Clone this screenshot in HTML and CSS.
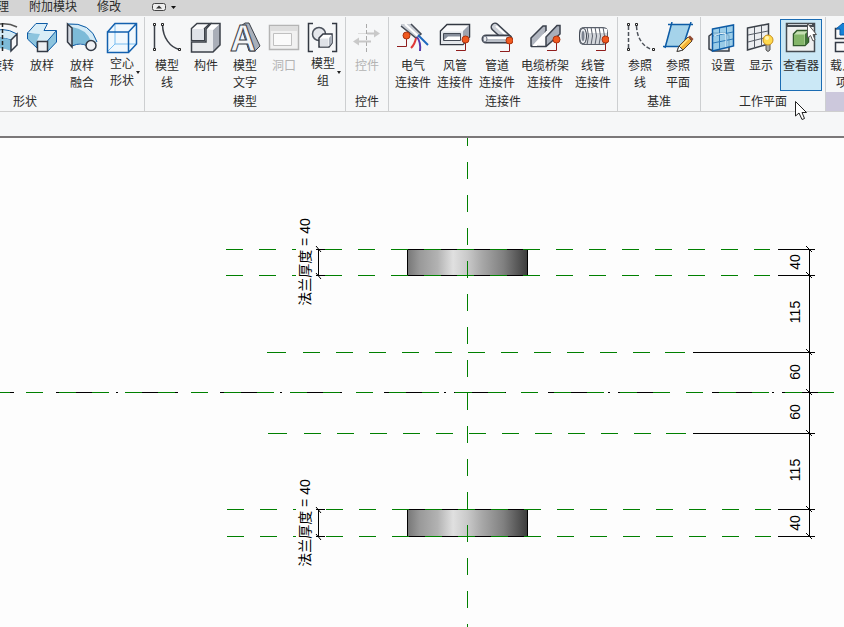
FILE: index.html
```html
<!DOCTYPE html>
<html lang="zh-CN">
<head>
    <meta charset="UTF-8">
    <meta name="viewport" content="width=device-width, initial-scale=1.0">
    <title>族编辑器</title>
    <link rel="stylesheet" href="styles.css">
</head>
<body>

<nav class="tabs">
    <a href="#">管理</a>
    <a href="#">附加模块</a>
    <a href="#">修改</a>
    <button class="tabs-toggle" type="button" aria-label="最小化功能区">
        <svg width="26" height="10" viewBox="0 0 26 10">
            <rect x="1.500" y="1.500" width="13" height="7" rx="2" fill="#eee" stroke="#444"/>
            <path d="M5 6.500L8 3.500L11 6.500z" fill="#333"/>
            <path d="M20 4h5l-2.500 3z" fill="#111"/>
        </svg>
    </button>
</nav>

<header class="ribbon">
    <section class="panel panel-shape">
        <div class="tools">
            <button class="tool" type="button">
                <svg class="icon" viewBox="0 0 32 32">
                    <path d="M2 6Q17-2 31 5" fill="none" stroke="#555" stroke-width="1.500"/>
                    <path d="M2 12Q16 3 31 12L25 18Q14 14 2 18z" fill="#d5ebf6" stroke="#0d5ba5"/>
                    <path d="M2 18Q14 14 25 18V29Q14 24 2 28z" fill="#7dbbd8"/>
                    <path d="M25 18L31 12V23L25 29z" fill="#f5f6f8" stroke="#333a45" stroke-width="1.500"/>
                    <path d="M16.500 1V31" stroke="#222" stroke-width="1.500" stroke-dasharray="4 2"/>
                </svg>
                <span class="label">旋转</span>
            </button>
            <button class="tool" type="button">
                <svg class="icon" viewBox="0 0 32 32">
                    <path d="M1.500 11V17L11 26V20H21V30L30.500 20V9z" fill="#8cc4de" stroke="#0d5ba5"/>
                    <path d="M1.500 11L10 1.500H21.500L18 8.500H30.500L21 19.500H10.500L14 12z" fill="#d9edf7"/>
                    <path d="M1.500 11L10 1.500H21.500L18 8.500H30.500L21 19.500" fill="none" stroke="#0d5ba5"/>
                    <path d="M11.500 19.500H21.500V29.500H11.500z" fill="#eef0f3" stroke="#333a45" stroke-width="1.500"/>
                </svg>
                <span class="label">放样</span>
            </button>
            <button class="tool" type="button">
                <svg class="icon" viewBox="0 0 32 32">
                    <path d="M1 2Q25 0 31 20L21 24Q16 19 6 24V5z" fill="#7dbbd8"/>
                    <path d="M1 2Q25 0 31 20L25 19Q20 7 6 5z" fill="#d3eaf6"/>
                    <path d="M1 2Q25 0 31 20M6 24Q15 20 21 24" fill="none" stroke="#0d5ba5"/>
                    <path d="M1.500 2L6 6V25L1.500 20z" fill="#d5d9e0" stroke="#333a45" stroke-width="1.500"/>
                    <circle cx="25" cy="23.500" r="5" fill="#f0f1f4" stroke="#333a45" stroke-width="1.500"/>
                </svg>
                <span class="label">放样<br>融合</span>
            </button>
            <button class="tool tool-menu" type="button">
                <svg class="icon" viewBox="0 0 32 32">
                    <path d="M1 10L9 1.500H30.500V22L22 30.500H1z" fill="#f1f8fd"/>
                    <path d="M9 2V22H30M9 22L1 30" fill="none" stroke="#79bdf0"/>
                    <path d="M1.500 10H22.500V30.500H1.500zL9 1.500H30.500V22L22.500 30.500M22.500 10L30.500 1.500" fill="none" stroke="#1260ae" stroke-width="1.500"/>
                </svg>
                <span class="label">空心<br>形状</span>
            </button>
        </div>
        <h2 class="panel-title">形状</h2>
    </section>

    <section class="panel panel-model">
        <div class="tools">
            <button class="tool" type="button">
                <svg class="icon" viewBox="0 0 32 32">
                    <path d="M3.500 3V28M11.500 3C12 16 19 25 28 27.500" fill="none" stroke="#3b4048" stroke-width="1.500"/>
                    <path d="M2.500 1.500h2v2h-2zM2.500 26.500h2v2h-2zM10.500 1.500h2v2h-2zM27.500 26.500h2v2h-2z" fill="#fff" stroke="#222"/>
                </svg>
                <span class="label">模型<br>线</span>
            </button>
            <button class="tool" type="button">
                <svg class="icon" viewBox="0 0 32 32">
                    <path d="M1.500 22V30H23L30 23V1.500H21L16 7V19H5z" fill="#e8eaed"/>
                    <path d="M23 8L30 1.500V23L23 30z" fill="#a9aeb8"/>
                    <path d="M16 7L21 1.500H30L23 8z" fill="#fff"/>
                    <path d="M1.500 20V30H23L30 23V1.500H21L16 7V20z" fill="none" stroke="#3b4048" stroke-width="1.500"/>
                    <path d="M1.500 6.500L7 1.500H20L14.500 6.500V18.500H1.500z" fill="#fafafb" stroke="#3b4048" stroke-width="1.500"/>
                    <path d="M2.500 7H14V18H2.500z" fill="#dfe2e8"/>
                </svg>
                <span class="label">构件</span>
            </button>
            <button class="tool" type="button">
                <svg class="icon" viewBox="0 0 32 32">
                    <path d="M12 4L16 1H20L31 24L26 29H20z" fill="#aab0ba" stroke="#3b4048" stroke-linejoin="round"/>
                    <text class="icon-letter" x="1" y="29">A</text>
                </svg>
                <span class="label">模型<br>文字</span>
            </button>
            <button class="tool" type="button" disabled>
                <svg class="icon" viewBox="0 0 32 32">
                    <path d="M1.500 3.500H30.500V27.500H1.500z" fill="#f1f1f1" stroke="#b4b4b4" stroke-width="1.500"/>
                    <path d="M2 4H30V9H2z" fill="#dedede"/>
                    <path d="M5.500 11.500H23.500V23.500H5.500z" fill="#fafafa" stroke="#c0c0c0"/>
                </svg>
                <span class="label">洞口</span>
            </button>
            <button class="tool tool-menu" type="button">
                <svg class="icon" viewBox="0 0 32 32">
                    <path d="M6 1.500H1.500V29.500H6M25 1.500H29.500V29.500H25" fill="none" stroke="#333842" stroke-width="1.500"/>
                    <circle cx="12" cy="12" r="6.500" fill="#e6e8ec" stroke="#4c525c" stroke-width="1.500"/>
                    <path d="M12 16L16 12H25V21L22 25H12z" fill="#fff" stroke="#333842" stroke-width="1.500"/>
                    <path d="M13 16.500H21.500V24.500H13z" fill="#dfe2e7"/>
                    <path d="M22 16L25 12.500V21L22 24.500z" fill="#aab0ba"/>
                </svg>
                <span class="label">模型<br>组</span>
            </button>
        </div>
        <h2 class="panel-title">模型</h2>
    </section>

    <section class="panel panel-control">
        <div class="tools">
            <button class="tool" type="button" disabled>
                <svg class="icon" viewBox="0 0 32 32">
                    <path d="M15.500 2V30" stroke="#aaa" stroke-dasharray="4 2"/>
                    <path d="M16 11.500H24M7 19.500H20" stroke="#c6c6c6" stroke-width="2"/>
                    <path d="M23 7.500L29 11.500L23 15.500zM8 15.500L2 19.500L8 23.500z" fill="#c9c9c9"/>
                    <path d="M7 11.500H15" stroke="#ddd"/>
                </svg>
                <span class="label">控件</span>
            </button>
        </div>
        <h2 class="panel-title">控件</h2>
    </section>

    <section class="panel">
        <div class="tools">
            <button class="tool" type="button">
                <svg class="icon" viewBox="0 0 32 32">
                    <path d="M4 2H14L24 12L19 16L4 5z" fill="#c9cdd4"/>
                    <path d="M14 2L24 12L19 16L4 4" fill="none" stroke="#444a55" stroke-width="1.500"/>
                    <path d="M8 2L21 14" stroke="#fff" stroke-width="2"/>
                    <path d="M19 16Q18 22 14 26" fill="none" stroke="#e03838" stroke-width="2"/>
                    <path d="M20 15Q24 20 23 29" fill="none" stroke="#5b39ad" stroke-width="2"/>
                    <path d="M21 13L31 23" stroke="#1c68bd" stroke-width="2"/>
                    <path class="lead" d="M9.500 13V24.500H0"/>
                    <circle class="node" cx="9.500" cy="13.500" r="3.500"/>
                </svg>
                <span class="label">电气<br>连接件</span>
            </button>
            <button class="tool" type="button">
                <svg class="icon" viewBox="0 0 32 32">
                    <path d="M1.500 9L8 2.500H30.500V15L24 22.500H1.500z" fill="#fafafb" stroke="#333842" stroke-width="1.500"/>
                    <path d="M24 9L30 3V15L24 22z" fill="#9da3af"/>
                    <path d="M2 9.500H24V22H2z" fill="#e3e6ea"/>
                    <path d="M4.500 11.500H21.500V18.500H4.500z" fill="#878e9b" stroke="#444a55"/>
                    <path d="M5 18L9 14.500H21V18z" fill="#fff"/>
                    <path class="lead" d="M26.500 17V28.500H17"/>
                    <circle class="node" cx="26.500" cy="17.500" r="3.500"/>
                </svg>
                <span class="label">风管<br>连接件</span>
            </button>
            <button class="tool" type="button">
                <svg class="icon" viewBox="0 0 32 32">
                    <path d="M14 5L27 17" stroke="#3b414c" stroke-width="9" stroke-linecap="round"/>
                    <path d="M14 5L27 17" stroke="#cdd1d8" stroke-width="6" stroke-linecap="round"/>
                    <path d="M15 4L26 14" stroke="#fff" stroke-width="2"/>
                    <path d="M5 17H27" stroke="#3b414c" stroke-width="9" stroke-linecap="round"/>
                    <path d="M5 17H27" stroke="#b8bdc6" stroke-width="6" stroke-linecap="round"/>
                    <path d="M5 16H25" stroke="#fff" stroke-width="2"/>
                    <ellipse cx="4" cy="17" rx="2" ry="3" fill="#e8eaee" stroke="#6b7280"/>
                    <path class="lead" d="M28.500 18V29.500H19"/>
                    <circle class="node" cx="28.500" cy="18.500" r="3.500"/>
                </svg>
                <span class="label">管道<br>连接件</span>
            </button>
            <button class="tool" type="button">
                <svg class="icon" viewBox="0 0 32 32">
                    <path d="M2 16L14 4H17V9L8 24H2z" fill="#b2b7c1" stroke="#3b414c" stroke-width="1.500"/>
                    <path d="M17 9L8 24H17L27 9z" fill="#fafafb"/>
                    <path d="M2 24.500H17L31 12V3.500H28L17 15V24" fill="#a9afba" stroke="#3b414c" stroke-width="1.500"/>
                    <path d="M3 24L16 10V15L8 24z" fill="#fff"/>
                    <path class="lead" d="M27.500 17V28.500H18"/>
                    <circle class="node" cx="27.500" cy="17.500" r="3.500"/>
                </svg>
                <span class="label">电缆桥架<br>连接件</span>
            </button>
            <button class="tool" type="button">
                <svg class="icon" viewBox="0 0 32 32">
                    <rect x="2.500" y="5.500" width="28" height="17" rx="4" fill="#d3d6db" stroke="#5a606b"/>
                    <path d="M9 9H30" stroke="#fff" stroke-width="4"/>
                    <path d="M10 5Q13 14 10 23M14 5Q17 14 14 23M18 5Q21 14 18 23M22 5Q25 14 22 23M26 5Q29 14 26 23" fill="none" stroke="#5a606b"/>
                    <ellipse cx="6" cy="14" rx="3.500" ry="8" fill="#e6e8ec" stroke="#3b414c"/>
                    <ellipse cx="6" cy="14" rx="1.500" ry="5" fill="#7b828f"/>
                    <path class="lead" d="M28.500 17V28.500H19"/>
                    <circle class="node" cx="28.500" cy="17.500" r="3.500"/>
                </svg>
                <span class="label">线管<br>连接件</span>
            </button>
        </div>
        <h2 class="panel-title">连接件</h2>
    </section>

    <section class="panel">
        <div class="tools">
            <button class="tool" type="button">
                <svg class="icon" viewBox="0 0 32 32">
                    <path d="M4.500 4V27M12.500 4C13 16 19 25 28 27.500" fill="none" stroke="#4b5058" stroke-width="1.500" stroke-dasharray="4 2"/>
                    <path d="M3.500 1.500h2v2h-2zM3.500 26.500h2v2h-2zM11.500 1.500h2v2h-2zM28.500 26.500h2v2h-2z" fill="#fff" stroke="#222"/>
                </svg>
                <span class="label">参照<br>线</span>
            </button>
            <button class="tool" type="button">
                <svg class="icon" viewBox="0 0 32 32">
                    <path d="M9 2.500H29L22 24H3z" fill="#a5d3ea"/>
                    <path d="M6 2.500H31M1 24.500H18M10 0L3 26M29 0L23 18" fill="none" stroke="#0d5ba5" stroke-width="1.500"/>
                    <path d="M15 29.500L17 24L26 15L30 19L21 28z" fill="#f5b335" stroke="#5b4630"/>
                    <path d="M18 25L27 16" stroke="#ffe68c" stroke-width="1.500"/>
                    <path d="M26 15L28 13.500L31.500 17L30 19z" fill="#934b32"/>
                    <path d="M15 29.500L17 24L21 28z" fill="#fff" stroke="#444"/>
                </svg>
                <span class="label">参照<br>平面</span>
            </button>
        </div>
        <h2 class="panel-title">基准</h2>
    </section>

    <section class="panel">
        <div class="tools">
            <button class="tool" type="button">
                <svg class="icon" viewBox="0 0 32 32">
                    <path d="M2 14L6 11H19L22 14V29H6L2 27z" fill="#dfe4ea" stroke="#3b4048" stroke-width="1.500"/>
                    <path d="M5.500 7L26.500 3V24L5.500 29z" fill="#8dc7e6" fill-opacity=".85" stroke="#0d5ba5" stroke-width="1.500"/>
                    <path d="M12.500 6V27M19.500 5V25M6 14L26 10M6 21L26 17" stroke="#2a78b8" stroke-width="1"/>
                    <path d="M7 14Q15 10 19 12V25" fill="none" stroke="#e9f5fb"/>
                </svg>
                <span class="label">设置</span>
            </button>
            <button class="tool" type="button">
                <svg class="icon" viewBox="0 0 32 32">
                    <path d="M2.500 6L23.500 2V22L2.500 28z" fill="#eceef1" stroke="#3b4048" stroke-width="1.500"/>
                    <path d="M9.500 5V26M16.500 4V24M3 13L23 9M3 20L23 15" stroke="#555b65"/>
                    <path d="M21 22H25V28Q23 31 21 28z" fill="#aaa" stroke="#555"/>
                    <circle cx="23" cy="18" r="5" fill="#ffda4d" stroke="#c78f20"/>
                    <circle cx="22" cy="16" r="2" fill="#fff5b5"/>
                </svg>
                <span class="label">显示</span>
            </button>
            <button class="tool active" type="button">
                <svg class="icon" viewBox="0 0 32 32">
                    <path d="M1.500 1.500H29.500V29.500H1.500z" fill="#f0f0f0" stroke="#454b52" stroke-width="1.500"/>
                    <path d="M1 1H30V5H1z" fill="#454b52"/>
                    <path d="M3 2.500H27" stroke="#cdd2d6"/>
                    <path d="M8.500 12L12 8.500H23.500V20L20 23.500H8.500z" fill="#c5dfb2" stroke="#31592b" stroke-width="1.500"/>
                    <path d="M9 12.500H19.500V23H9z" fill="#83b568"/>
                    <path d="M20 12L23 9V20L20 23z" fill="#3f7436"/>
                    <path d="M22.500 1.500V16L25.500 13.500L28 19L30 18L28 12.500H31.500z" fill="#fff" stroke="#555"/>
                </svg>
                <span class="label">查看器</span>
            </button>
        </div>
        <h2 class="panel-title">工作平面</h2>
    </section>

    <section class="panel panel-editor">
        <div class="tools">
            <button class="tool" type="button">
                <svg class="icon" viewBox="0 0 32 32">
                    <path d="M3.500 6.500H28.500V16.500H3.500zM3.500 20.500H28.500V29.500H3.500z" fill="#fafafa" stroke="#333a45" stroke-width="1.500"/>
                    <path d="M11 1L17 7H13V13H8V7H4z" fill="#1682d8" stroke="#0d5ba5"/>
                </svg>
                <span class="label">载入到<br>项目</span>
            </button>
        </div>
        <div class="panel-title"></div>
    </section>

    <svg class="cursor" width="14" height="21" viewBox="0 0 14 21">
        <path d="M1.500 1.500V16L5 13L8 19.500L10.500 18.500L8 12.500H12.500z" fill="#fff" stroke="#222"/>
    </svg>
</header>

<div class="options-bar"></div>

<main class="view">
    <svg class="drawing" viewBox="0 138 844 489" preserveAspectRatio="xMinYMin slice">
        <defs>
            <linearGradient id="steel">
                <stop offset="0" stop-color="#777"/>
                <stop offset=".1" stop-color="#999"/>
                <stop offset=".25" stop-color="#b2b2b2"/>
                <stop offset=".38" stop-color="#e0e0e0"/>
                <stop offset=".5" stop-color="#c9c9c9"/>
                <stop offset=".62" stop-color="#a8a8a8"/>
                <stop offset=".8" stop-color="#808080"/>
                <stop offset="1" stop-color="#3c3c3c"/>
            </linearGradient>
        </defs>

        <!-- flanges -->
        <rect class="flange" x="407.500" y="249.500" width="120" height="26"/>
        <rect class="flange" x="407.500" y="509.500" width="120" height="27"/>

        <!-- pipe axis, centre line under the reference plane -->
        <path class="axis" d="M-108 392.500H818"/>

        <!-- reference planes -->
        <path class="plane" d="M226 249.500H770M226 275.500H770"/>
        <path class="plane" d="M227 509.500H771M227 536.500H771"/>
        <path class="plane" d="M303 352.500H652M304 433.500H653"/>
        <path class="plane-end" d="M267 352.500h19M665 352.500h20M268 433.500h19M666 433.500h20"/>
        <path class="plane" d="M-7 392.500H834"/>
        <path class="plane" d="M467.500 129V627"/>

        <!-- flange thickness -->
        <rect class="mask" x="296" y="217" width="19" height="91"/>
        <rect class="mask" x="296" y="478" width="19" height="91"/>
        <path class="dim" d="M318.500 249V276M316 249.500H325M316 275.500H325M318.500 509V537M316 509.500H325M316 536.500H325"/>
        <path class="tick" d="M316 246L321 252M316 273L321 279M316 507L321 513M316 534L321 540"/>
        <text class="dim-text" transform="translate(310 262) rotate(-90)">法兰厚度 = 40</text>
        <text class="dim-text" transform="translate(310 523) rotate(-90)">法兰厚度 = 40</text>

        <!-- dimension chain -->
        <path class="dim" d="M809.500 249V537M778 249.500H815M778 275.500H815M693 352.500H815M693 433.500H815M778 509.500H815M778 536.500H815"/>
        <path class="tick" d="M806 246L812 252M806 272L812 278M806 349L812 355M806 389L812 395M806 430L812 436M806 506L812 512M806 533L812 539"/>
        <text class="dim-text" transform="translate(800 262) rotate(-90)">40</text>
        <text class="dim-text" transform="translate(800 312) rotate(-90)">115</text>
        <text class="dim-text" transform="translate(800 372) rotate(-90)">60</text>
        <text class="dim-text" transform="translate(800 412) rotate(-90)">60</text>
        <text class="dim-text" transform="translate(800 470) rotate(-90)">115</text>
        <text class="dim-text" transform="translate(800 523) rotate(-90)">40</text>
    </svg>
</main>

</body>
</html>
```
FILE: styles.css
```css
* {
    box-sizing: border-box;
}

body {
    margin: 0;
    height: 100vh;
    display: flex;
    flex-direction: column;
    overflow: hidden;
    background-color: #fdfdfd;
    color: #2b2b2b;
    font-family: "Liberation Sans", "Noto Sans CJK SC", sans-serif;
    font-size: 12px;
}

button {
    font: inherit;
    color: inherit;
    background: none;
    border: none;
    padding: 0;
}

/* tab row */
.tabs {
    display: flex;
    flex: none;
    gap: 20px;
    height: 16px;
    margin-left: -15px;
    background-color: #d4d4d4;
    line-height: 14px;
    white-space: nowrap;
}

.tabs a {
    color: inherit;
    text-decoration: none;
}

.tabs-toggle {
    display: flex;
    margin-left: 10px;
    padding-top: 2px;
}

/* ribbon */
.ribbon {
    position: relative;
    display: flex;
    flex: none;
    background-color: #f6f7f8;
    border-bottom: 1px solid #cfcfcf;
    padding-top: 1px;
    white-space: nowrap;
}

.panel {
    flex: none;
    display: flex;
    flex-direction: column;
    border-right: 1px solid #cdcfd1;
    padding: 2px 3px 0;
}

.tools {
    display: flex;
}

.panel-title {
    margin: 1px 0 0;
    height: 19px;
    font-size: 12px;
    font-weight: 400;
    line-height: 20px;
    text-align: center;
}

.panel-shape {
    margin-left: -94px;
}

.panel-shape .tools {
    gap: 2px;
    padding-left: 74px;
}

.panel-model .tools {
    gap: 1px;
}

.panel-control {
    padding-left: 2px;
    padding-right: 2px;
}

.panel-editor {
    padding-left: 0;
    padding-right: 0;
    border-right: none;
}

.panel-editor .panel-title {
    background-color: #ccc8dc;
}

.tool {
    position: relative;
    display: flex;
    flex-direction: column;
    align-items: center;
    min-width: 38px;
    height: 72px;
    padding: 2px 2px 0;
    border: 1px solid transparent;
}

.tool:hover,
.tool.active {
    background-color: #cbe8f6;
    border-color: #1b6cb3;
}

.tool:disabled {
    color: #b3b3b3;
}

.icon {
    width: 32px;
    height: 32px;
    flex: none;
}

.label {
    margin-top: 4px;
    line-height: 17px;
    text-align: center;
}

.tool-menu .label {
    margin-top: 2px;
    line-height: 17px;
}

.tool-menu::after {
    content: "";
    position: absolute;
    right: 0;
    bottom: 16px;
    border: 2px solid transparent;
    border-top: 3px solid #222;
    border-bottom: none;
}

.panel-editor .tool {
    padding: 2px 3px 0;
}

.icon-letter {
    font-family: "Liberation Sans", sans-serif;
    font-size: 36px;
    font-weight: 700;
    fill: #f3f4f6;
    stroke: #3b4048;
    stroke-width: 1px;
}

.lead {
    fill: none;
    stroke: #8f1d1d;
}

.node {
    fill: #f0591f;
    stroke: #a8320f;
}

.cursor {
    position: absolute;
    left: 794px;
    top: 84px;
}

.options-bar {
    flex: none;
    height: 26px;
    background-color: #f6f7f8;
    border-bottom: 2px solid #7b7879;
}

/* drawing area */
.view {
    flex: 1;
    min-height: 0;
}

.drawing {
    display: block;
    width: 100%;
    height: 100%;
}

.flange {
    fill: url(#steel);
    stroke: #000;
    shape-rendering: crispEdges;
}

.axis {
    stroke: #000;
    stroke-dasharray: 52 8 2 8 52 42;
    shape-rendering: crispEdges;
}

.plane,
.plane-end {
    stroke: #008000;
    shape-rendering: crispEdges;
}

.plane {
    stroke-dasharray: 17 16;
}

.mask {
    fill: #fdfdfd;
}

.dim {
    stroke: #000;
    shape-rendering: crispEdges;
}

.tick {
    stroke: #000;
}

.dim-text {
    font-size: 14px;
    text-anchor: middle;
    fill: #000;
}
```
